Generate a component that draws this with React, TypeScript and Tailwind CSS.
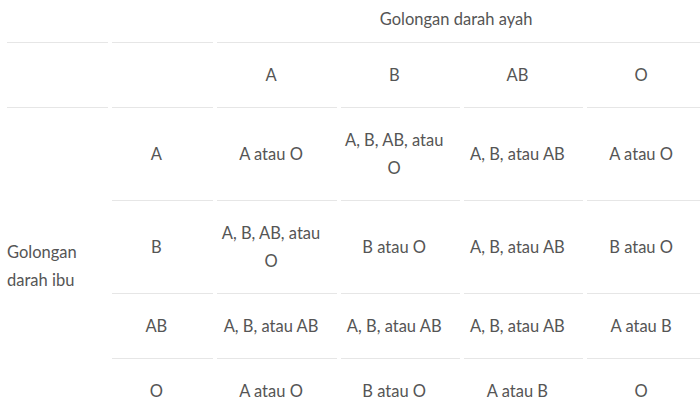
const fathers = ['A', 'B', 'AB', 'O'];

const rows: { mother: string; cells: string[] }[] = [
  { mother: 'A', cells: ['A atau O', 'A, B, AB, atau O', 'A, B, atau AB', 'A atau O'] },
  { mother: 'B', cells: ['A, B, AB, atau O', 'B atau O', 'A, B, atau AB', 'B atau O'] },
  { mother: 'AB', cells: ['A, B, atau AB', 'A, B, atau AB', 'A, B, atau AB', 'A atau B'] },
  { mother: 'O', cells: ['A atau O', 'B atau O', 'A atau B', 'O'] },
];

const cell = 'border-b border-[#e6e6e6] pl-1 pr-4 py-[18px] text-center align-middle font-normal';

export default function App() {
  return (
    <div className="h-[414px] w-[700px] overflow-hidden bg-white">
      <table
        className="ml-[3px] table-fixed border-separate border-spacing-x-[4px] border-spacing-y-0 text-[16.5px] leading-[28px] text-[#555]"
        style={{ fontFamily: 'Lato, "Open Sans", sans-serif', width: 708 }}
      >
        <colgroup>
          <col className="w-[100px]" />
          <col className="w-[101px]" />
          <col className="w-[119px]" />
          <col className="w-[118px]" />
          <col className="w-[119px]" />
          <col className="w-[119px]" />
        </colgroup>
        <thead>
          <tr>
            <th className="border-b border-[#e6e6e6] pb-[9px] pt-[5px] font-normal" />
            <th className="border-b border-[#e6e6e6] pb-[9px] pt-[5px] font-normal" />
            <th colSpan={4} className="border-b border-[#e6e6e6] pb-[9px] pl-1 pr-4 pt-[5px] text-center font-normal">
              Golongan darah ayah
            </th>
          </tr>
          <tr>
            <th className={cell} />
            <th className={cell} />
            {fathers.map((f) => (
              <th key={f} className={cell}>
                {f}
              </th>
            ))}
          </tr>
        </thead>
        <tbody>
          {rows.map((r, i) => (
            <tr key={r.mother}>
              {i === 0 && (
                <td rowSpan={4} className="border-b border-[#e6e6e6] py-[18px] pr-2 text-left align-middle">
                  Golongan
                  <br />
                  darah ibu
                </td>
              )}
              <td className={cell}>{r.mother}</td>
              {r.cells.map((c, j) => (
                <td key={j} className={cell}>
                  {c}
                </td>
              ))}
            </tr>
          ))}
        </tbody>
      </table>
    </div>
  );
}
